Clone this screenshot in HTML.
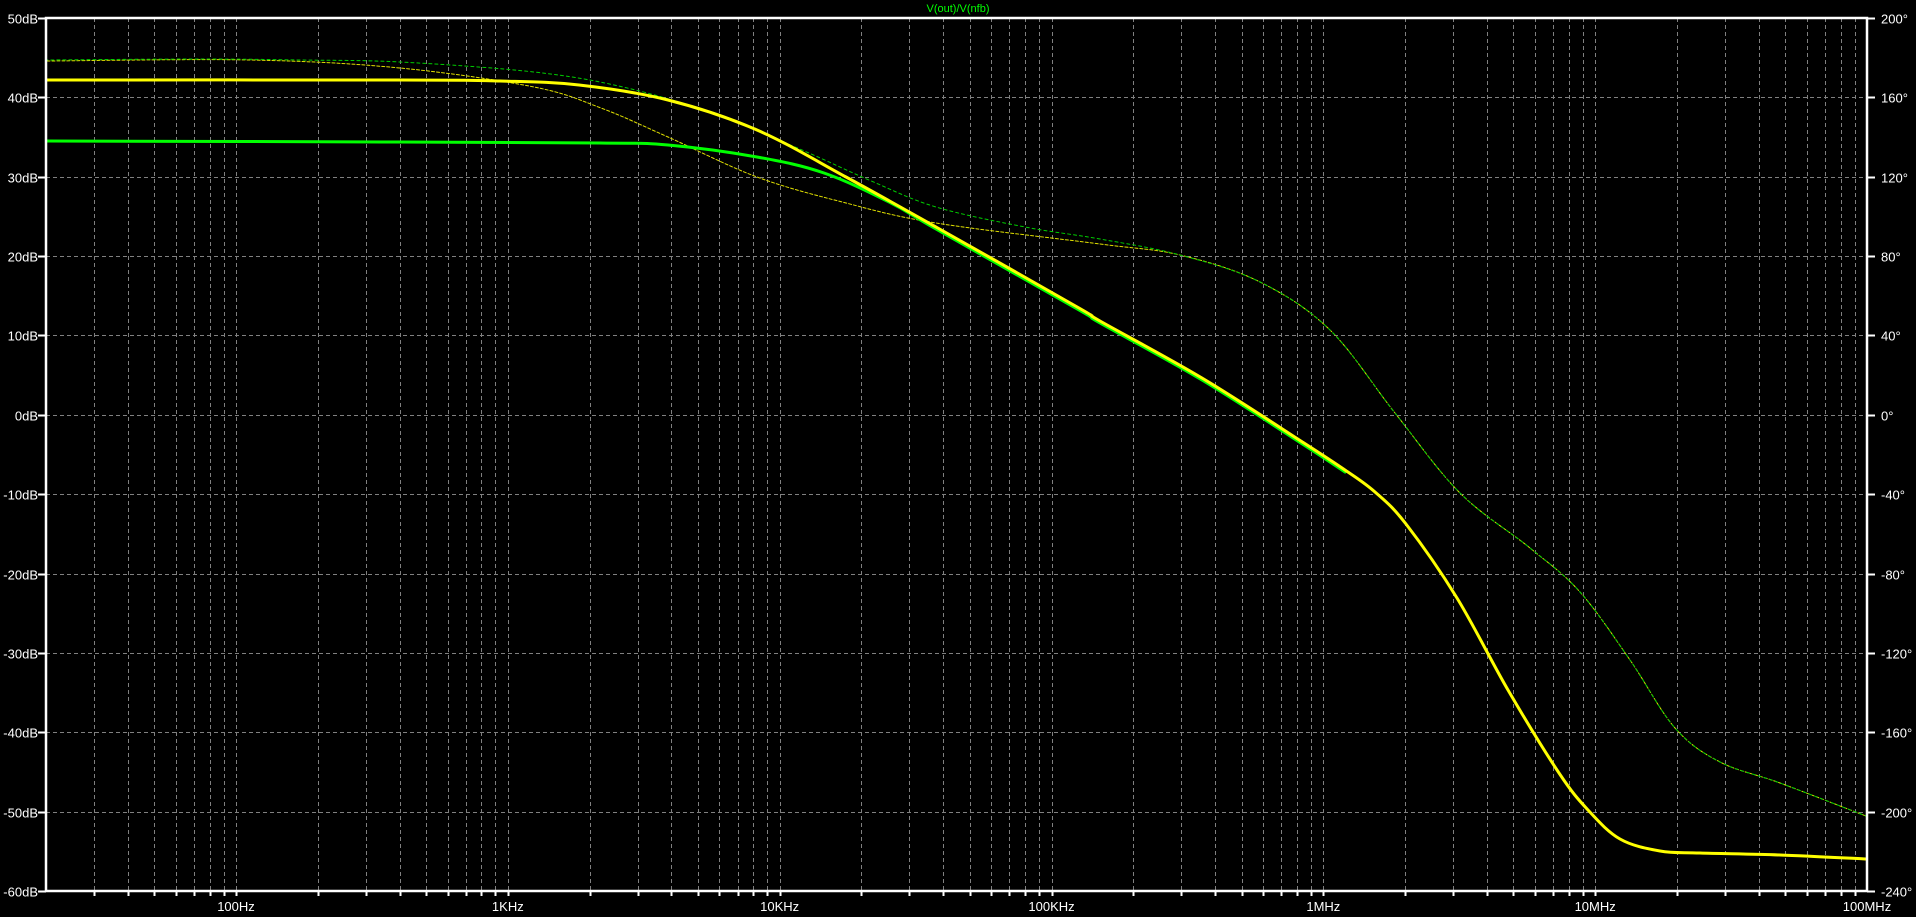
<!DOCTYPE html>
<html><head><meta charset="utf-8"><style>
html,body{margin:0;padding:0;background:#000;overflow:hidden}
svg{display:block}
text{font-family:"Liberation Sans",sans-serif;font-size:13px;fill:#fff}
</style></head><body>
<svg id="s" width="1916" height="917" xmlns="http://www.w3.org/2000/svg">
<text x="958" y="12" text-anchor="middle" style="fill:#00ff00;font-size:11px">V(out)/V(nfb)</text>
<g id="grid"></g>
<g id="curves" fill="none" stroke-linejoin="round" stroke-linecap="round"></g>
<g id="ax"></g>
</svg>
<script>
var NS="http://www.w3.org/2000/svg",g=document.getElementById('grid'),ax=document.getElementById('ax'),cv=document.getElementById('curves');
function el(p,t,a,txt){var e=document.createElementNS(NS,t);for(var k in a)e.setAttribute(k,a[k]);if(txt)e.textContent=txt;p.appendChild(e);return e;}
var L=46,R=1867,T=18,B=891,D=(R-L)/Math.log10(5e6);
function fx(f){return L+Math.log10(f/20)*D;}
var labs={100:"100Hz",1000:"1KHz",1e4:"10KHz",1e5:"100KHz",1e6:"1MHz",1e7:"10MHz",1e8:"100MHz"};
for(var dec=10;dec<=1e7;dec*=10){for(var m=1;m<=9;m++){var f=dec*m;if(f<=20)continue;var x=Math.round(fx(f))+0.5;
if(x<R-1)el(g,'line',{x1:x,y1:T,x2:x,y2:B,stroke:'#808080','stroke-width':1,'stroke-dasharray':'4 3'});
el(ax,'line',{x1:x,y1:B,x2:x,y2:B+5,stroke:'#fff','stroke-width':2});}}
for(var f in labs){el(ax,'text',{x:fx(+f),y:911,'text-anchor':'middle'},labs[f]);}
for(var i=0;i<=11;i++){var y=Math.round(T+i*(B-T)/11)+0.5;
if(i>0&&i<11)el(g,'line',{x1:L,y1:y,x2:R,y2:y,stroke:'#808080','stroke-width':1,'stroke-dasharray':'4 3'});
el(ax,'line',{x1:L-8,y1:y,x2:L,y2:y,stroke:'#fff','stroke-width':2});
el(ax,'line',{x1:R,y1:y,x2:R+8,y2:y,stroke:'#fff','stroke-width':2});
el(ax,'text',{x:38,y:y+5,'text-anchor':'end'},(50-10*i)+"dB");
el(ax,'text',{x:1881,y:y+5},(200-40*i)+"°");}
el(ax,'rect',{x:L,y:T,width:R-L,height:B-T,fill:'none',stroke:'#fff','stroke-width':2.5});
function smooth(p){var d="M"+p[0][0]+","+p[0][1];for(var i=0;i<p.length-1;i++){var p0=p[i-1]||p[i],p1=p[i],p2=p[i+1],p3=p[i+2]||p2;
d+=" C"+(p1[0]+(p2[0]-p0[0])/6)+","+(p1[1]+(p2[1]-p0[1])/6)+" "+(p2[0]-(p3[0]-p1[0])/6)+","+(p2[1]-(p3[1]-p1[1])/6)+" "+p2[0]+","+p2[1];}return d;}
var tail=[[1180,255],[1260,282],[1330,330],[1395,413],[1460,493],[1530,548],[1580,592],[1630,660],[1675,728],[1720,762],[1780,783],[1866,816]];
var gd=[[47,60],[200,59],[300,60],[400,62],[534,72],[623,87],[712,113],[802,150],[869,180],[936,207],[1025,227],[1100,239]].concat(tail);
var yd=[[47,61],[250,60],[400,68],[534,87],[601,108],[668,137],[757,177],[846,203],[936,223],[1100,244]].concat(tail);
var ys=[[47,80],[400,80],[500,81],[579,85],[668,100],[757,130],[846,177],[936,227],[1079,308],[1100,321],[1202,378],[1304,443],[1345,470],[1375,492],[1406,524],[1457,598],[1508,690],[1559,773],[1588,810],[1620,839],[1660,851],[1700,853],[1780,855],[1866,859]];
var gs=[[47,141],[400,142],[600,143],[668,145],[757,157],[824,173],[891,203],[936,229],[1079,310],[1100,323],[1202,380],[1304,445],[1345,472]];
el(cv,'path',{d:smooth(yd),stroke:'#e0e000','stroke-width':1,'stroke-dasharray':'3 2'});
el(cv,'path',{d:smooth(gd),stroke:'#00cc00','stroke-width':1,'stroke-dasharray':'3 3','stroke-dashoffset':2});
el(cv,'path',{d:smooth(gs),stroke:'#00ff00','stroke-width':3});
el(cv,'path',{d:smooth(ys),stroke:'#ffff00','stroke-width':3});
</script>
</body></html>
